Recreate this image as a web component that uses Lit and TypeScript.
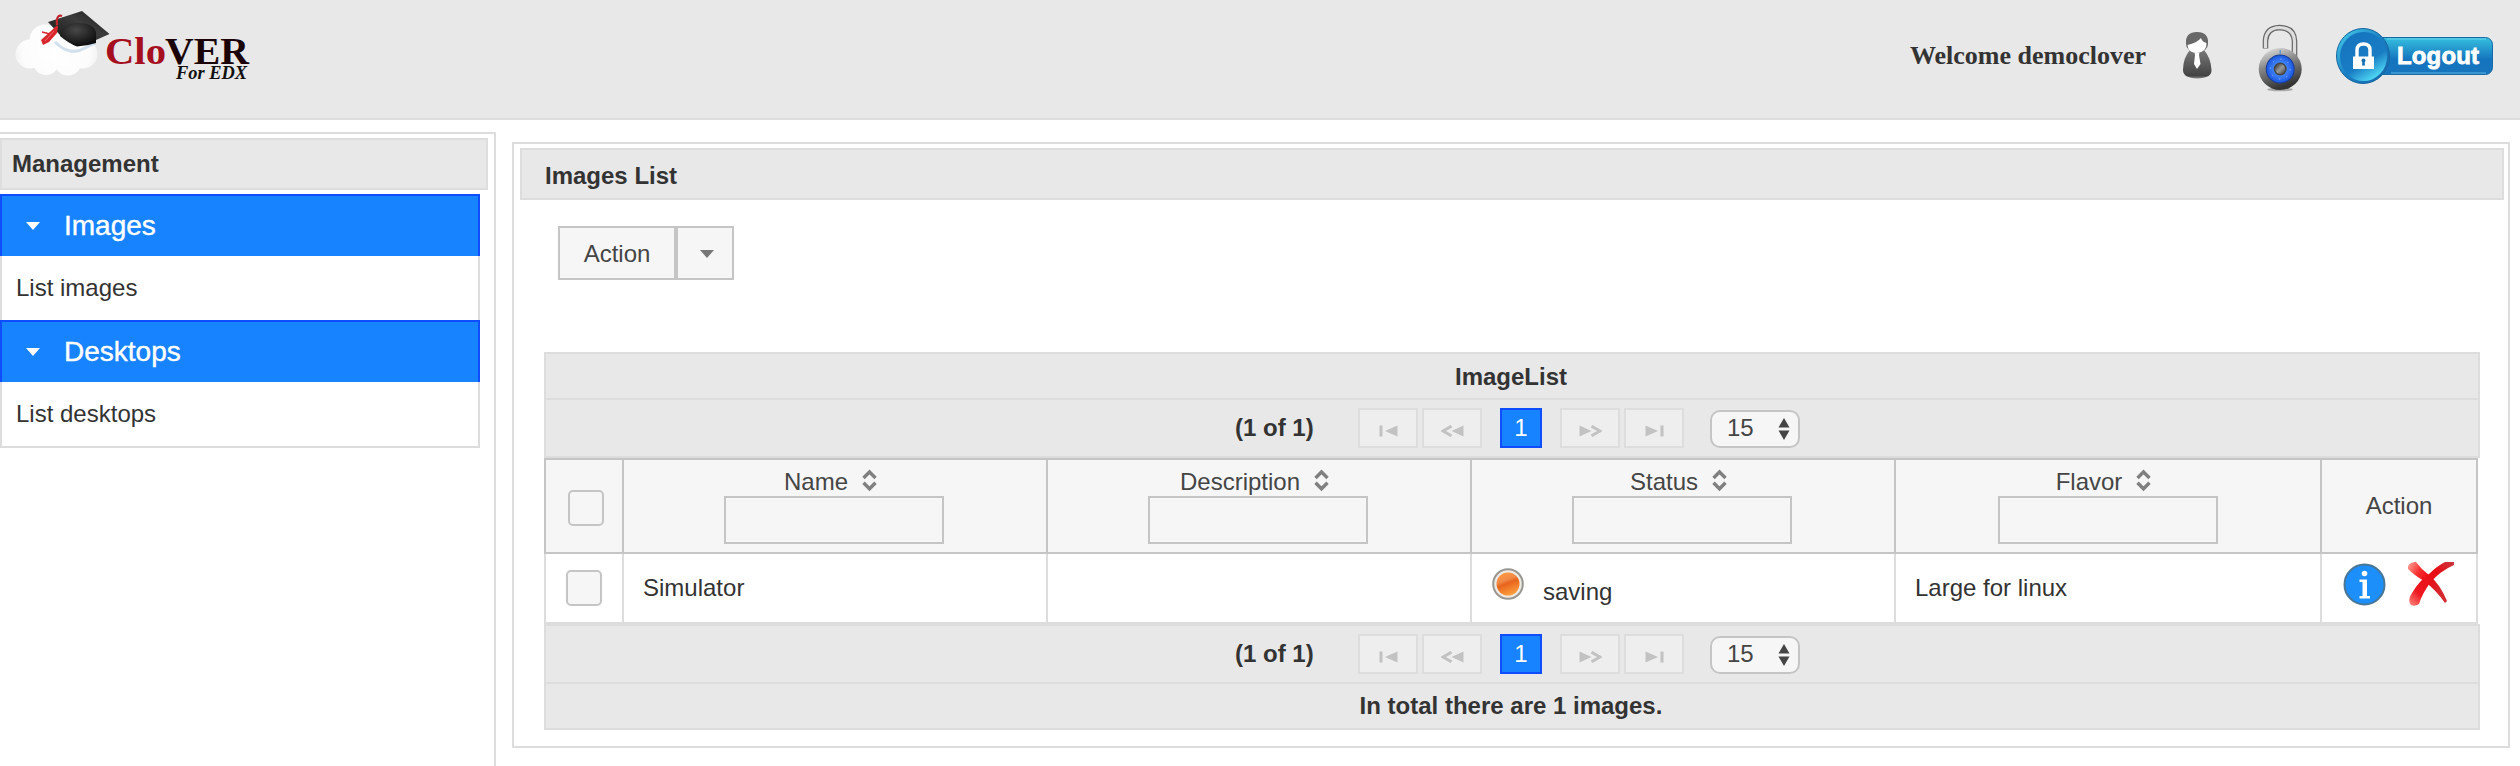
import { LitElement, html, css, svg } from "lit";
import { customElement } from "lit/decorators.js";

const COLUMNS = ["Name", "Description", "Status", "Flavor"];

const MENU = [
  { title: "Images", items: ["List images"] },
  { title: "Desktops", items: ["List desktops"] },
];

const caret = html`<svg class="caret" width="14" height="8" viewBox="0 0 14 8">
  <path d="M0 0H14L7 8Z" fill="currentColor" />
</svg>`;

const sortIcon = html`<svg class="sort" width="38" height="28" viewBox="0 0 38 28">
  <g fill="none" stroke="#808080" stroke-width="3.400">
    <path d="M15.500 10L21.500 4L27.500 10" />
    <path d="M15.500 14.800L21.500 20.800L27.500 14.800" />
  </g>
</svg>`;

const pageGlyphs: Record<string, unknown> = {
  first: svg`<path d="M0.5 0.5H3.5V11.5H0.5ZM18.5 0.5V11.5L6 6Z"/>`,
  prev: svg`<path d="M22.5 0.5V11.5L10.5 6Z"/><path d="M10.5 1.2L2 6L10.5 10.8" fill="none" stroke="#c2c2c2" stroke-width="3"/>`,
  next: svg`<path d="M0.5 0.5V11.5L12.5 6Z"/><path d="M12.5 1.2L21 6L12.5 10.8" fill="none" stroke="#c2c2c2" stroke-width="3"/>`,
  last: svg`<path d="M15.5 0.5H18.5V11.5H15.5ZM0.5 0.5V11.5L13 6Z"/>`,
};

@customElement("clover-logo")
class CloverLogo extends LitElement {
  static styles = css`
    :host { display: block; width: 260px; height: 90px; }
    svg { display: block; }
    .word { font: bold 38.5px "Liberation Serif", serif; }
    .sub { font: italic bold 19px "Liberation Serif", serif; }
  `;
  render() {
    return html`<svg width="260" height="90" viewBox="0 0 260 90">
      <defs>
        <radialGradient id="cloud" gradientUnits="userSpaceOnUse" cx="56" cy="50" r="42">
          <stop offset="0" stop-color="#fff" /><stop offset=".8" stop-color="#fcfcfc" /><stop offset="1" stop-color="#f3f3f3" />
        </radialGradient>
        <linearGradient id="board" x1="0" y1="1" x2="1" y2="0">
          <stop offset="0" stop-color="#111" /><stop offset=".6" stop-color="#3c3c3c" /><stop offset="1" stop-color="#1a1a1a" />
        </linearGradient>
        <radialGradient id="crown" cx=".45" cy=".3" r=".7">
          <stop offset="0" stop-color="#484848" /><stop offset="1" stop-color="#0c0c0c" />
        </radialGradient>
      </defs>
      <g fill="url(#cloud)">
        <circle cx="30" cy="54" r="14.5" /><circle cx="45" cy="40" r="15.5" /><circle cx="46" cy="62" r="13" />
        <circle cx="68" cy="62" r="13.5" /><circle cx="83" cy="54" r="14.5" /><rect x="32" y="36" width="52" height="30" />
      </g>
      <path d="M55 42Q70 57 85 48L95 43" fill="none" stroke="#bfd3e6" stroke-width="3" opacity=".7" />
      <path d="M48 22L82 11L109.500 34L96 40L76 46L60 35Z" fill="url(#board)" />
      <path d="M60 34Q62 24 78 23Q93 23 96 32V43Q87 46 77 46.500Q68 43 60 36Z" fill="url(#crown)" />
      <path d="M62 16Q56 14 57 25" fill="none" stroke="#c4242b" stroke-width="2.200" />
      <path d="M57 25L51 31L41 40L43 45L49 42L57 33L58 27Z" fill="#d8262c" />
      <path d="M42 32L50 34" stroke="#d8262c" stroke-width="1.500" />
      <path d="M45 41L54 31" stroke="#f0696d" stroke-width="1" />
      <text class="word" x="105" y="64" fill="#a50f1e" textLength="61" lengthAdjust="spacingAndGlyphs">Clo</text>
      <text class="word" x="165" y="64" fill="#1a0408" textLength="84" lengthAdjust="spacingAndGlyphs">VER</text>
      <text class="sub" x="176" y="79" fill="#111" textLength="71" lengthAdjust="spacingAndGlyphs">For EDX</text>
    </svg>`;
  }
}

@customElement("page-navigator")
class PageNavigator extends LitElement {
  static styles = css`
    :host {
      display: flex; align-items: flex-start; box-sizing: border-box; height: 60px;
      padding: 8px 0 0 689px; border: 2px solid #ddd;
      font: 24px/40px "Liberation Sans", Arial, sans-serif; color: #333; background: #e8e8e8;
    }
    .count { width: 123px; font-weight: bold; line-height: 39px; white-space: nowrap; }
    .btn {
      box-sizing: border-box; width: 60px; height: 40px; margin-right: 4px; background: #eee;
      border: 2px solid #ddd; display: flex; justify-content: center; padding-top: 15px;
    }
    .page {
      box-sizing: border-box; width: 42px; height: 40px; margin: 0 18px 0 14px; text-align: center;
      color: #fff; background: #1783ff; border: 2px solid #0f4eff; line-height: 35px;
    }
    .rows {
      box-sizing: border-box; width: 90px; height: 38px; margin: 2px 0 0 22px; border: 2px solid #c5c5c5;
      border-radius: 10px; background: #f6f6f6; color: #454545; line-height: 31px;
      display: flex; justify-content: space-between; padding: 0 8px 0 15px;
    }
    .arrows { margin-top: 6px; }
    svg { display: block; flex: none; }
  `;
  private button(kind: string, width: number) {
    return html`<div class="btn"><svg width=${width} height="12" fill="#c2c2c2">${pageGlyphs[kind]}</svg></div>`;
  }
  render() {
    return html`
      <div class="count">(1 of 1)</div>
      ${this.button("first", 19)}${this.button("prev", 23)}
      <div class="page">1</div>
      ${this.button("next", 23)}${this.button("last", 19)}
      <div class="rows">
        <span>15</span>
        <svg class="arrows" width="12" height="22" fill="#454545"><path d="M.5 9.500L6 0L11.500 9.500ZM.5 12.500H11.500L6 22Z" /></svg>
      </div>
    `;
  }
}

@customElement("app-root")
class AppRoot extends LitElement {
  static styles = css`
    :host {
      display: flex; flex-direction: column; height: 766px; overflow: hidden; background: #fff;
      font: 24px/28px "Liberation Sans", Arial, sans-serif; color: #333;
    }
    svg { display: block; flex: none; }
    .top {
      box-sizing: border-box; height: 120px; flex: none; display: flex; justify-content: space-between;
      background: #e8e8e8; border-bottom: 2px solid #ddd;
    }
    .user { display: flex; align-items: flex-start; padding-right: 26px; }
    .welcome {
      font: bold 26px/30px "Liberation Serif", serif; width: 272px;
      margin-top: 41px; white-space: nowrap;
    }
    .person { margin: 30px 45px 0 0; }
    .lock { margin: 24px 32px 0 0; }
    .logout { margin-top: 27px; }
    .logout-text { font: bold 24px "Liberation Sans", Arial, sans-serif; }
    .main { display: flex; flex: 1; align-items: flex-start; }
    .side {
      box-sizing: border-box; width: 496px; height: 634px; margin-top: 12px; flex: none;
      border: 2px solid #ddd; border-width: 2px 2px 0 0; padding-top: 4px;
    }
    .bar {
      box-sizing: border-box; height: 52px; border: 2px solid #ddd; background: #e8e8e8;
      font-weight: bold; line-height: 48px;
    }
    .side-bar { width: 488px; padding-left: 10px; margin-bottom: 4px; }
    .menu { box-sizing: border-box; width: 480px; }
    .menu-head {
      box-sizing: border-box; height: 62px; display: flex; align-items: center; gap: 24px; color: #fff;
      background: #1783ff; border: 2px solid #0f4eff; border-bottom: 0; padding-left: 24px;
      font-size: 28px; line-height: 60px; -webkit-text-stroke: .4px #fff;
    }
    .menu-item { height: 64px; line-height: 64px; padding-left: 14px; border: solid #ddd; border-width: 0 2px; }
    .menu-item:last-child { border-bottom-width: 2px; }
    .panel {
      box-sizing: border-box; flex: 1; height: 606px; margin: 22px 10px 0 16px; border: 2px solid #ddd;
      padding: 4px 4px 0 6px;
    }
    .panel-bar { padding-left: 23px; line-height: 51px; }
    .split { display: flex; margin: 26px 0 72px 38px; color: #454545; }
    .split-btn, .split-menu {
      box-sizing: border-box; height: 54px; border: 2px solid #c5c5c5; background: #f6f6f6;
      display: flex; align-items: center; justify-content: center;
    }
    .split-btn { width: 118px; padding-top: 1px; }
    .split-menu { width: 58px; color: #777; padding: 2px 0 0 4px; }
    .table { width: 1936px; margin-left: 24px; }
    .caption, .total {
      box-sizing: border-box; border: 2px solid #ddd; background: #e8e8e8; text-align: center; font-weight: bold;
      padding-right: 2px;
    }
    .caption { height: 46px; border-bottom: 0; line-height: 45px; }
    .total { height: 46px; border-top: 0; line-height: 44px; }
    .grid {
      display: grid; grid-template-columns: 78px 424px 424px 424px 426px 156px; width: 1932px;
      border-left: 2px solid #ddd;
    }
    .head { height: 94px; border-top: 2px solid #c5c5c5; border-left-color: #c5c5c5; color: #454545; background: #f6f6f6; }
    .th, .td { box-sizing: border-box; border-right: 2px solid #c5c5c5; border-bottom: 2px solid #c5c5c5; }
    .td { border-color: #ddd; display: flex; }
    .body { height: 70px; background: #fff; }
    .th { display: flex; flex-direction: column; align-items: center; padding-top: 8px; }
    .label { display: flex; height: 28px; }
    .filter {
      box-sizing: border-box; width: 220px; height: 48px; padding: 0; border: 2px solid #c5c5c5;
      border-radius: 0; background: #f6f6f6; outline: 0; margin: 0 2px 0 0;
    }
    .filter.even { margin-right: 0; }
    .check { box-sizing: border-box; width: 36px; height: 36px; border: 2px solid #c5c5c5; border-radius: 5px; background: #f6f6f6; }
    .th .check { margin: 22px 0 0 4px; }
    .td .check { margin: 16px 0 0 20px; }
    .td-text { padding: 20px 0 0 19px; }
    .td-status { padding: 14px 0 0 20px; gap: 19px; }
    .status-text { margin-top: 10px; }
    .td-actions { padding: 8px 0 0 21px; gap: 22px; }
    .th-action { padding-top: 32px; }
  `;

  private userIcons() {
    return html`
      <svg class="person" width="31" height="51" viewBox="0 0 31 51">
        <defs>
          <linearGradient id="suit" x1="0" y1="0" x2="0" y2="1"><stop offset="0" stop-color="#777" /><stop offset=".9" stop-color="#444" /><stop offset="1" stop-color="#888" /></linearGradient>
        </defs>
        <path d="M8 20Q1 28 1 40Q1 48 15 48.500Q30 48 29.500 40Q29 28 22 20Z" fill="url(#suit)" />
        <path d="M12 20H18L17 25L18.500 34L15 39L12 34L13 25Z" fill="#fff" />
        <path d="M4 14Q3 2 15 2Q27 2 26 14Q26 21 15 23Q4 21 4 14Z" fill="#686868" />
        <path d="M5.500 15Q15 13 19 8Q20 12 24.500 13Q25 22 15 23Q6 23 5.500 15Z" fill="#fff" />
      </svg>
      <svg class="lock" width="45" height="68" viewBox="0 0 45 68">
        <defs>
          <linearGradient id="steel" x1="0" y1="0" x2=".35" y2="1"><stop offset="0" stop-color="#eee" /><stop offset=".45" stop-color="#8a8a8a" /><stop offset="1" stop-color="#343434" /></linearGradient>
          <radialGradient id="dial"><stop offset=".3" stop-color="#4b91ff" /><stop offset="1" stop-color="#1d59e0" /></radialGradient>
          <linearGradient id="knob" x1="0" y1="0" x2="1" y2="1"><stop offset="0" stop-color="#333" /><stop offset=".5" stop-color="#999" /><stop offset="1" stop-color="#444" /></linearGradient>
        </defs>
        <path d="M7.500 24.500V17Q8 4 21.500 3.500Q36 4 36.500 17V34" fill="none" stroke="#666" stroke-width="5.600" />
        <path d="M7.500 24V17Q8 4 21.500 3.500Q36 4 36.500 17V34" fill="none" stroke="#ddd" stroke-width="3.200" />
        <ellipse cx="22" cy="65.500" rx="13" ry="1.800" fill="#aaa" />
        <ellipse cx="22.200" cy="45" rx="21.500" ry="21" fill="url(#steel)" />
        <circle cx="22.200" cy="45" r="14.500" fill="#173d9a" />
        <circle cx="22.200" cy="45" r="13.500" fill="url(#dial)" />
        <circle cx="22.200" cy="45" r="10" fill="none" stroke="#8ab8ff" stroke-width="1" stroke-dasharray="1.500 6.300" />
        <path d="M22.200 26V30" stroke="#3b8bd0" stroke-width="1" />
        <circle cx="22.200" cy="45" r="6.500" fill="#444" /><circle cx="22.200" cy="45" r="5" fill="url(#knob)" />
      </svg>
      <svg class="logout" width="159" height="58" viewBox="0 0 159 58">
        <defs>
          <linearGradient id="pill" x1="0" y1="0" x2="0" y2="1"><stop offset="0" stop-color="#36bfdf" /><stop offset=".6" stop-color="#1474be" /><stop offset="1" stop-color="#1775bd" /></linearGradient>
          <linearGradient id="ring" x1="0" y1="0" x2="1" y2="1"><stop offset="0" stop-color="#49d3ee" /><stop offset=".5" stop-color="#1b7fc4" /><stop offset="1" stop-color="#1666ad" /></linearGradient>
          <linearGradient id="disc" x1="0" y1="0" x2=".6" y2="1"><stop offset="0" stop-color="#1472bd" /><stop offset=".7" stop-color="#197dc4" /><stop offset="1" stop-color="#4dd4f2" /></linearGradient>
        </defs>
        <rect x="30" y="10.500" width="127.500" height="37" rx="7" fill="url(#pill)" stroke="#176ba6" />
        <path d="M56 46H151" stroke="#5fb4e0" stroke-width="1" />
        <path d="M52 12H151" stroke="#66d3ea" stroke-width="1" />
        <ellipse cx="28" cy="29" rx="26.500" ry="27.500" fill="url(#ring)" stroke="#17679e" />
        <ellipse cx="28.500" cy="29.500" rx="23.500" ry="24.500" fill="url(#disc)" />
        <path d="M22 30V23Q22 17 28.500 17Q35 17 35 23V30" fill="none" stroke="#fff" stroke-width="3.400" />
        <rect x="18" y="29.500" width="21" height="12.500" fill="#fff" />
        <circle cx="28.500" cy="33.500" r="2" fill="#1570b4" /><path d="M27.500 34H29.500L30 38.500H27Z" fill="#1570b4" />
        <text class="logout-text" x="62" y="37" fill="#fff" stroke="#fff" stroke-width=".8" textLength="82">Logout</text>
      </svg>
    `;
  }

  render() {
    return html`
      <header class="top">
        <clover-logo></clover-logo>
        <div class="user"><span class="welcome">Welcome democlover</span>${this.userIcons()}</div>
      </header>
      <div class="main">
        <nav class="side">
          <div class="bar side-bar">Management</div>
          <div class="menu">
            ${MENU.map((group) => html`
              <div class="menu-head">${caret}<span>${group.title}</span></div>
              ${group.items.map((item) => html`<div class="menu-item">${item}</div>`)}
            `)}
          </div>
        </nav>
        <section class="panel">
          <div class="bar panel-bar">Images List</div>
          <div class="split">
            <div class="split-btn">Action</div>
            <div class="split-menu">${caret}</div>
          </div>
          <div class="table">
            <div class="caption">ImageList</div>
            <page-navigator></page-navigator>
            <div class="grid head">
              <div class="th"><div class="check"></div></div>
              ${COLUMNS.map((name, i) => html`
                <div class="th">
                  <div class="label"><span>${name}</span>${sortIcon}</div>
                  <input class=${i === 3 ? "filter even" : "filter"} aria-label=${name} />
                </div>
              `)}
              <div class="th th-action">Action</div>
            </div>
            <div class="grid body">
              <div class="td"><div class="check"></div></div>
              <div class="td td-text">Simulator</div>
              <div class="td"></div>
              <div class="td td-status">
                <svg width="32" height="32" viewBox="0 0 32 32">
                  <defs><linearGradient id="ball" x1=".2" y1="0" x2=".6" y2="1"><stop offset="0" stop-color="#ff9a3c" /><stop offset=".35" stop-color="#f08a48" /><stop offset=".5" stop-color="#e8641c" /><stop offset="1" stop-color="#ffa040" /></linearGradient></defs>
                  <circle cx="16" cy="16" r="14.800" fill="#eee9e2" stroke="#999691" stroke-width="2" />
                  <circle cx="16" cy="16" r="11.500" fill="url(#ball)" />
                </svg>
                <span class="status-text">saving</span>
              </div>
              <div class="td td-text">Large for linux</div>
              <div class="td td-actions">
                <svg width="43" height="44" viewBox="0 0 43 44">
                  <circle cx="21.500" cy="22.500" r="20" fill="#1c8ffb" stroke="#4a7696" stroke-width="2" />
                  <circle cx="21.500" cy="11.500" r="2.800" fill="#fff" />
                  <path d="M16.500 17.500H24V34H27V36.500H16.500V34H19.500V20H16.500Z" fill="#fff" />
                </svg>
                <svg width="46" height="44" viewBox="0 0 46 44">
                  <defs><linearGradient id="cross" x1="0" y1="0" x2="1" y2=".6"><stop offset="0" stop-color="#ffaaa0" /><stop offset=".3" stop-color="#fb3030" /><stop offset=".55" stop-color="#ea0c16" /><stop offset="1" stop-color="#d42a30" /></linearGradient>
                  <linearGradient id="stroke" x1="0" y1="1" x2="1" y2="0"><stop offset="0" stop-color="#ff8a80" /><stop offset=".25" stop-color="#ee1820" /><stop offset=".7" stop-color="#e80c14" /><stop offset="1" stop-color="#c83a40" /></linearGradient></defs>
                  <path d="M0 4Q2 0 8 0Q13 7 21 13Q32 22 39 39L37 41Q28 28 16 19Q6 13 0 7Z" fill="url(#cross)" />
                  <path d="M46 0V3Q32 9 22 21Q14 32 11 42Q7 45 3 43Q-1 38 4 31Q11 19 21 12Q29 4 37 0Z" fill="url(#stroke)" />
                </svg>
              </div>
            </div>
            <page-navigator></page-navigator>
            <div class="total">In total there are 1 images.</div>
          </div>
        </section>
      </div>
    `;
  }
}
